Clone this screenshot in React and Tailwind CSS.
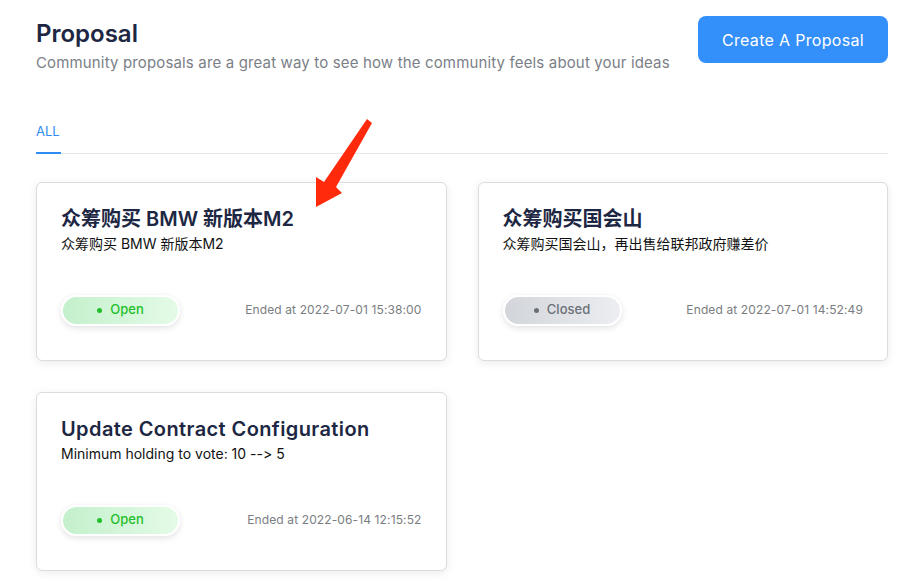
import React from 'react';

const FONT = "font-['Inter','Noto_Sans_CJK_SC',sans-serif] [font-feature-settings:'calt'_0,'liga'_0]";

const PROPOSALS = [
  {
    id: 1,
    title: '众筹购买 BMW 新版本M2',
    desc: '众筹购买 BMW 新版本M2',
    open: true,
    ended: '2022-07-01 15:38:00',
  },
  {
    id: 2,
    title: '众筹购买国会山',
    desc: '众筹购买国会山，再出售给联邦政府赚差价',
    open: false,
    ended: '2022-07-01 14:52:49',
  },
  {
    id: 3,
    title: 'Update Contract Configuration',
    desc: 'Minimum holding to vote: 10 --> 5',
    open: true,
    ended: '2022-06-14 12:15:52',
    latin: true,
  },
];

function StatusPill({ open }) {
  return open ? (
    <span className="w-[119px] h-[31px] rounded-full border-2 border-white bg-gradient-to-r from-[#c4f0cc] to-[#e4fbe7] shadow-[0_2px_6px_rgba(0,0,0,0.12)] flex items-center justify-center gap-2 text-[13px] font-medium text-[#1fc02b]">
      <span className="w-[5px] h-[5px] rounded-full bg-[#1fc02b]" />
      Open
    </span>
  ) : (
    <span className="w-[119px] h-[31px] rounded-full border-2 border-white bg-gradient-to-r from-[#d2d5da] to-[#eceef1] shadow-[0_2px_6px_rgba(0,0,0,0.12)] flex items-center justify-center gap-2 text-[13px] font-medium text-[#6b7078]">
      <span className="w-[5px] h-[5px] rounded-full bg-[#6b7078]" />
      Closed
    </span>
  );
}

function ProposalCard({ p }) {
  return (
    <div className="h-[179px] rounded-md border border-[#dcdcdc] bg-white shadow-[0_2px_10px_rgba(0,0,0,0.08)] px-[24px] pt-[22px] pb-[34px] flex flex-col">
      <h3 className={`text-[20px] leading-[28px] font-semibold text-[#1d2743] ${p.latin ? 'tracking-[0.02em]' : ''}`}>
        {p.title}
      </h3>
      <p className="mt-[1px] text-[14px] leading-[20px] text-[#111]">{p.desc}</p>
      <div className="mt-auto flex items-center justify-between">
        <StatusPill open={p.open} />
        <span className="text-[12px] tracking-[0.01em] text-[#7a7d82]">Ended at {p.ended}</span>
      </div>
    </div>
  );
}

export default function App() {
  return (
    <div className={`relative min-h-[583px] bg-white pl-[36px] pr-[23px] pt-[16px] ${FONT}`}>
      {/* Header */}
      <div className="flex items-start justify-between">
        <div className="pt-[3px]">
          <h1 className="text-[24px] leading-[30px] font-semibold text-[#1d2743]">Proposal</h1>
          <p className="mt-[3px] text-[15px] leading-[22px] tracking-[0.01em] text-[#7b8087]">
            Community proposals are a great way to see how the community feels about your ideas
          </p>
        </div>
        <button className="w-[190px] h-[47px] rounded-lg bg-[#338ff9] text-white text-[16px] tracking-[0.02em]">
          Create A Proposal
        </button>
      </div>

      {/* Tabs */}
      <div className="mt-[48px] border-b border-[#e8e8e8] flex">
        <button className="pb-[10px] border-b-2 border-[#2f8cf5] -mb-px text-[13px] text-[#2f8cf5] w-[25px] text-left">
          ALL
        </button>
      </div>

      {/* Cards */}
      <div className="mt-[28px] grid grid-cols-2 gap-[31px]">
        {PROPOSALS.map((p) => (
          <ProposalCard key={p.id} p={p} />
        ))}
      </div>

      {/* Annotation arrow */}
      <svg className="absolute left-0 top-0 pointer-events-none" width="911" height="583">
        <path d="M367 119 L372 123 L336 187 L342 193 L316 207 L316 177 L324 182 Z" fill="#ff2a0c" />
      </svg>
    </div>
  );
}
